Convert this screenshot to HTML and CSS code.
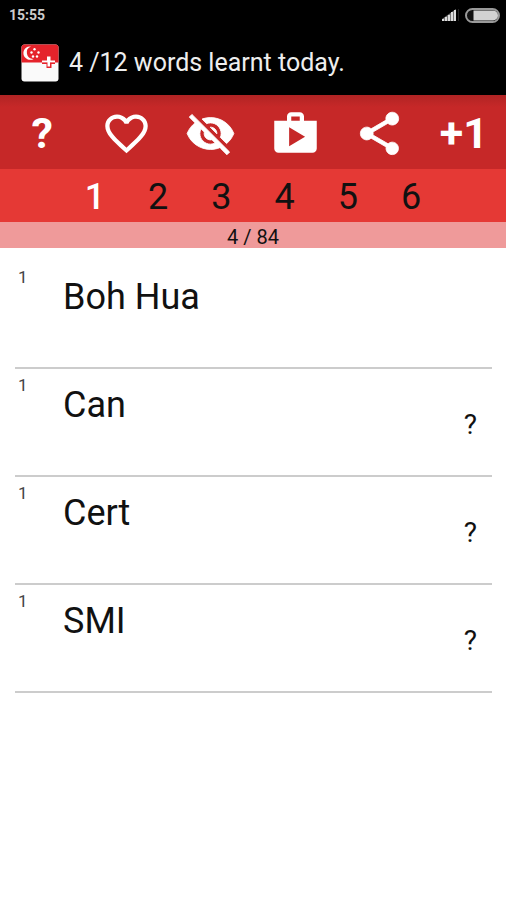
FILE: index.html
```
<!DOCTYPE html>
<html lang="en">
<head>
  <meta charset="UTF-8">
  <meta name="viewport" content="width=device-width, initial-scale=1.0">
  <title>Words learnt today</title>
  <link rel="stylesheet" href="styles.css">
</head>
<body>
<header class="top">
  <div class="status">
    <span>15:55</span>
    <span class="status-icons">
      <svg width="18" height="14" viewBox="0 0 18 14">
        <path fill="#777" d="M0 13v-2L14 1v12z"/>
        <path fill="#ddd" d="M0 11h2v2H0zM3 9h2v4H3zM6 7h2v6H6zM9 4h2v9H9zM12 2h2v11h-2z"/>
        <path fill="#222" d="M16 1h1v12h-1z"/>
      </svg>
      <svg width="35" height="15" viewBox="0 0 35 15">
        <rect x="1" y="1" width="33" height="13" rx="6.5" fill="#111" stroke="#999" stroke-width="2"/>
        <path fill="#d2d2d2" d="M8.500 2.500H28a5 5 0 0 1 0 10H8.500z"/>
      </svg>
    </span>
  </div>
  <div class="title">
    <svg width="38" height="38" viewBox="0 0 38 38">
      <rect x="0.500" y="0.500" width="37" height="37" rx="3" fill="#fafafa"/>
      <path fill="#e5232b" d="M3.500.5h31a3 3 0 0 1 3 3V18.500H.5V3.500a3 3 0 0 1 3-3z"/>
      <path fill="#fff" d="M10 2.500a6.700 6.700 0 1 0 2.500 12.400 6.400 6.400 0 0 1-2.500-12.400z"/>
      <g fill="#fff">
        <circle cx="13.500" cy="5.200" r="1.200"/>
        <circle cx="10.500" cy="8.500" r="1.200"/>
        <circle cx="17.500" cy="8.500" r="1.200"/>
        <circle cx="12" cy="12.500" r="1.200"/>
        <circle cx="16" cy="12.500" r="1.200"/>
      </g>
      <path fill="#fff" d="M26 12.500h3.500v6H26zM21 16.500h13v2H21z"/>
      <path fill="#e5232b" d="M21 18.500h13v1.500h-3.500v4h-5v-4H21z"/>
      <path fill="#fff" d="M26.500 17h2.500v5.500h-2.500z"/>
    </svg>
    <h1>4 /12 words learnt today.</h1>
  </div>
</header>

<nav class="toolbar">
  <button type="button" aria-label="Help">?</button>
  <button type="button" aria-label="Favourites">
    <svg viewBox="0 0 24 24"><path d="M16.500 3c-1.740 0-3.410.81-4.500 2.090C10.910 3.810 9.240 3 7.500 3 4.420 3 2 5.420 2 8.500c0 3.780 3.400 6.860 8.550 11.540L12 21.350l1.450-1.320C18.600 15.360 22 12.280 22 8.500 22 5.420 19.580 3 16.500 3zm-4.400 15.550l-.1.100-.1-.1C7.140 14.240 4 11.390 4 8.500 4 6.500 5.500 5 7.500 5c1.540 0 3.040.99 3.570 2.360h1.870C13.460 5.990 14.960 5 16.500 5c2 0 3.500 1.500 3.500 3.500 0 2.890-3.140 5.740-7.900 10.050z"/></svg>
  </button>
  <button type="button" aria-label="Hidden words">
    <svg class="bold" viewBox="0 0 24 24"><path d="M12 7c2.760 0 5 2.240 5 5 0 .65-.13 1.260-.36 1.830l2.920 2.920c1.510-1.260 2.700-2.890 3.430-4.750-1.730-4.390-6-7.500-11-7.500-1.400 0-2.740.25-3.980.7l2.160 2.160C10.740 7.130 11.350 7 12 7zM2 4.270l2.280 2.280.46.46C3.080 8.300 1.780 10.020 1 12c1.730 4.390 6 7.500 11 7.500 1.550 0 3.030-.3 4.380-.84l.42.42L19.730 22 21 20.730 3.270 3 2 4.270zM7.530 9.800l1.550 1.550c-.05.21-.08.43-.08.65 0 1.660 1.340 3 3 3 .22 0 .44-.03.65-.08l1.550 1.550c-.67.33-1.410.53-2.200.53-2.760 0-5-2.240-5-5 0-.79.2-1.530.53-2.200zm4.310-.78l3.150 3.150.02-.16c0-1.660-1.340-3-3-3l-.17.010z"/></svg>
  </button>
  <button type="button" aria-label="More apps">
    <svg viewBox="0 0 24 24"><path d="M16 6V4c0-1.110-.89-2-2-2h-4c-1.110 0-2 .89-2 2v2H2v13c0 1.110.89 2 2 2h16c1.110 0 2-.89 2-2V6h-6zm-6-2h4v2h-4V4zM9 18V9l7.500 4.500L9 18z"/></svg>
  </button>
  <button type="button" aria-label="Share">
    <svg class="bold" viewBox="0 0 24 24"><path d="M18 16.080c-.76 0-1.440.3-1.960.77L8.910 12.700c.05-.23.090-.46.090-.7s-.04-.47-.09-.7l7.050-4.110c.54.5 1.250.81 2.040.81 1.660 0 3-1.340 3-3s-1.340-3-3-3-3 1.340-3 3c0 .24.040.47.090.7L8.040 9.810C7.500 9.310 6.790 9 6 9c-1.660 0-3 1.340-3 3s1.340 3 3 3c.79 0 1.500-.31 2.040-.81l7.120 4.160c-.05.21-.08.43-.08.65 0 1.610 1.310 2.920 2.920 2.920s2.920-1.310 2.920-2.920-1.310-2.920-2.920-2.920z"/></svg>
  </button>
  <button type="button">+1</button>
</nav>

<nav class="levels">
  <button type="button" class="active">1</button>
  <button type="button">2</button>
  <button type="button">3</button>
  <button type="button">4</button>
  <button type="button">5</button>
  <button type="button">6</button>
</nav>

<div class="count">4 / 84</div>

<ul class="words">
  <li>
    <span class="level">1</span>
    <span class="word">Boh Hua</span>
  </li>
  <li>
    <span class="level">1</span>
    <span class="word">Can</span>
    <button type="button" class="reveal">?</button>
  </li>
  <li>
    <span class="level">1</span>
    <span class="word">Cert</span>
    <button type="button" class="reveal">?</button>
  </li>
  <li>
    <span class="level">1</span>
    <span class="word">SMI</span>
    <button type="button" class="reveal">?</button>
  </li>
</ul>
</body>
</html>
```
FILE: styles.css
```
body {
  font-family: Roboto, sans-serif;
  background-color: #fff;
  color: #111;
  margin: 0;
}
button {
  font-family: inherit;
  color: inherit;
  background: none;
  border: none;
  padding: 0;
  cursor: pointer;
}
.top {
  background-color: #000;
  color: #eee;
}
.status {
  display: flex;
  justify-content: space-between;
  align-items: center;
  height: 30px;
  padding: 0 6px 0 9px;
  font-size: 14px;
  font-weight: bold;
  color: #ccc;
}
.status-icons {
  display: flex;
  align-items: center;
  gap: 5px;
}
.title {
  display: flex;
  align-items: center;
  gap: 10px;
  height: 65px;
  padding: 0 21px;
}
.title h1 {
  font-size: 25px;
  font-weight: normal;
  margin: 0;
}
.toolbar {
  display: grid;
  grid-template-columns: repeat(6, 1fr);
  height: 72px;
  padding-top: 2px;
  background: linear-gradient(#b12424, #c62828 12px);
  color: #fff;
}
.toolbar button {
  display: flex;
  align-items: center;
  justify-content: center;
  font-size: 43px;
  font-weight: bold;
}
.toolbar svg {
  width: 51px;
  height: 51px;
  fill: currentColor;
}
.toolbar .bold {
  stroke: currentColor;
  stroke-width: 0.4;
}
.levels {
  display: grid;
  grid-template-columns: repeat(6, 1fr);
  height: 50px;
  padding: 3px 12.5% 0;
  background-color: #e53935;
}
.levels button {
  font-size: 36px;
}
.levels .active {
  color: #fff;
  font-weight: 500;
}
.count {
  height: 26px;
  line-height: 30px;
  text-align: center;
  font-size: 20px;
  background-color: #ef9a9a;
}
.words {
  list-style: none;
  margin: 0;
  padding: 13px 14px 0 15px;
}
.words li {
  display: flex;
  align-items: flex-start;
  height: 106px;
  border-bottom: 2px solid #ccc;
}
.level {
  width: 45px;
  padding: 6px 0 0 3px;
  font-size: 17px;
  color: #444;
}
.word {
  flex: 1;
  padding-top: 15px;
  font-size: 36px;
}
.reveal {
  padding: 39px 15px 0;
  font-size: 28px;
}
```
